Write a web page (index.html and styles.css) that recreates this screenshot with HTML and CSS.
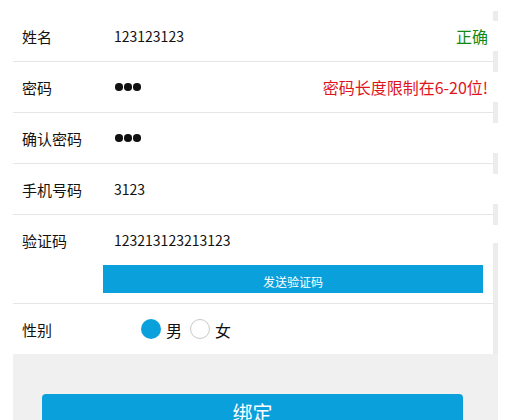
FILE: index.html
```html
<!DOCTYPE html>
<html lang="zh">
<head>
<meta charset="utf-8">
<link rel="stylesheet" href="styles.css">
</head>
<body>
<div class="page">
  <div class="frame">
    <div class="form">
      <div class="row">
        <span class="label">姓名</span>
        <span class="value">123123123</span>
        <span class="msg ok">正确</span>
      </div>
      <div class="row">
        <span class="label">密码</span>
        <span class="value dots"><i></i><i></i><i></i></span>
        <span class="msg err">密码长度限制在6-20位!</span>
      </div>
      <div class="row">
        <span class="label">确认密码</span>
        <span class="value dots"><i></i><i></i><i></i></span>
      </div>
      <div class="row">
        <span class="label">手机号码</span>
        <span class="value">3123</span>
      </div>
      <div class="row row-code">
        <div class="line">
          <span class="label">验证码</span>
          <span class="value">123213123213123</span>
        </div>
        <div class="send">发送验证码</div>
      </div>
      <div class="row last">
        <span class="label">性别</span>
        <div class="gender">
          <span class="radio on"></span><span class="opt">男</span>
          <span class="radio"></span><span class="opt">女</span>
        </div>
      </div>
    </div>
    <div class="strip"></div>
  </div>
  <div class="bottom">
    <div class="bind">绑定</div>
  </div>
</div>
</body>
</html>
```

FILE: styles.css
```css
html, body {
  margin: 0;
  padding: 0;
  background: #fff;
}
body {
  font-family: "Noto Sans CJK SC", "Microsoft YaHei", sans-serif;
  color: #111;
}
.page {
  width: 485px;
  margin-left: 13px;
  padding-top: 11px;
}
.frame {
  display: flex;
}
.form {
  flex: 1;
  background: #fff;
}
.strip {
  width: 5px;
  background:
    linear-gradient(to bottom, transparent 0, transparent 204px, #ececec 204px, #ececec 213px, transparent 213px, transparent 232px, #ececec 232px),
    repeating-linear-gradient(to bottom, #ececec 0, #ececec 10px, transparent 10px, transparent 40px, #ececec 40px, #ececec 51px);
}
.row {
  display: flex;
  align-items: center;
  height: 50px;
  border-bottom: 1px solid #e6e6e6;
  padding-right: 5px;
}
.row.last {
  border-bottom: none;
}
.label {
  width: 101px;
  padding-left: 9px;
  box-sizing: border-box;
  flex: none;
  font-size: 15px;
}
.value {
  flex: 1;
  font-size: 14px;
}
.dots {
  display: flex;
  gap: 1.5px;
  padding-left: 1px;
}
.dots i {
  width: 7.5px;
  height: 7.5px;
  border-radius: 50%;
  background: #111;
}
.msg {
  font-size: 16px;
}
.ok { color: #128a12; }
.err { color: #e0141e; }
.row-code {
  display: block;
  height: auto;
  padding: 0 10px 10px 0;
}
.line {
  display: flex;
  align-items: center;
  height: 50px;
}
.send {
  margin-left: 90px;
  height: 28px;
  background: #0aa0dc;
  color: #fff;
  font-size: 12px;
  text-align: center;
  line-height: 34px;
  overflow: hidden;
}
.gender {
  display: flex;
  align-items: center;
  padding-left: 27px;
}
.radio {
  width: 20px;
  height: 20px;
  border-radius: 50%;
  box-sizing: border-box;
  border: 1px solid #c8c8c8;
  background: #fff;
}
.radio.on {
  border: none;
  background: #0aa0dc;
}
.opt {
  font-size: 16px;
  margin: 2px 8px 0 5px;
}
.bottom {
  background: #f0f0f0;
  padding: 40px 35px 0 29px;
  height: 27px;
  overflow: hidden;
}
.bind {
  background: #0aa0dc;
  color: #fff;
  font-size: 20px;
  text-align: center;
  height: 40px;
  line-height: 38px;
  border-radius: 4px 4px 0 0;
}
```
